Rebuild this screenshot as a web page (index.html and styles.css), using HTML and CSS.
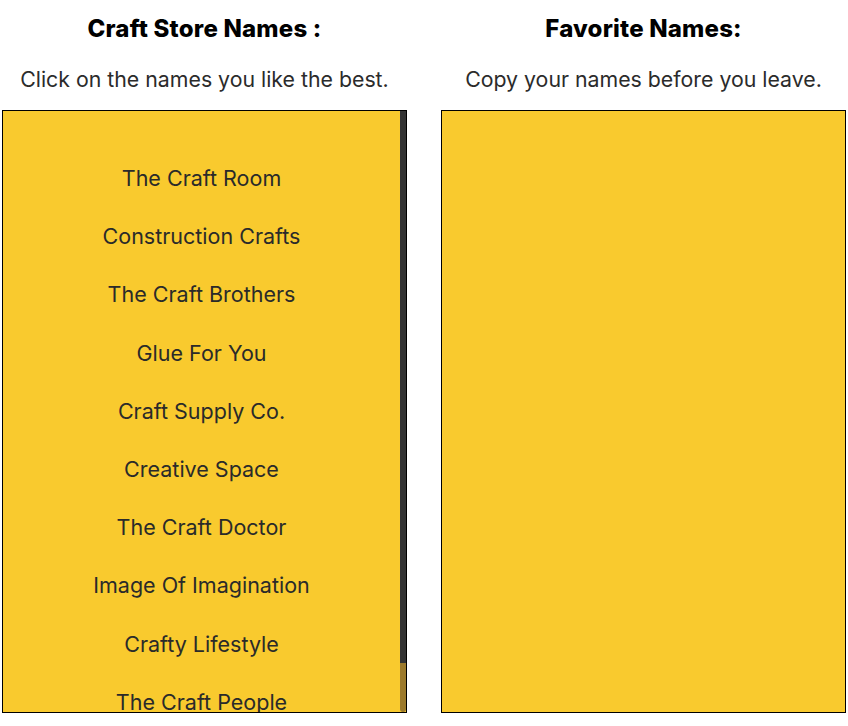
FILE: index.html
```html
<!DOCTYPE html>
<html lang="en">
<head>
  <meta charset="UTF-8">
  <title>Craft Store Names</title>
  <link rel="stylesheet" href="styles.css">
</head>
<body>

<div id="container">
  <div class="column">
    <h2>Craft Store Names :</h2>
    <p class="hint">Click on the names you like the best.</p>
    <div class="box">
      <ul id="nameList" class="list">
        <li>The Craft Room</li>
        <li>Construction Crafts</li>
        <li>The Craft Brothers</li>
        <li>Glue For You</li>
        <li>Craft Supply Co.</li>
        <li>Creative Space</li>
        <li>The Craft Doctor</li>
        <li>Image Of Imagination</li>
        <li>Crafty Lifestyle</li>
        <li>The Craft People</li>
      </ul>
      <div class="scrollbar">
        <div class="thumb"></div>
      </div>
    </div>
  </div>

  <div class="column">
    <h2>Favorite Names:</h2>
    <p class="hint">Copy your names before you leave.</p>
    <div class="box">
      <ul id="favoriteList" class="list"></ul>
    </div>
  </div>
</div>

</body>
</html>
```

FILE: styles.css
```css
body {
  margin: 0;
  padding: 0;
  background-color: #fff;
  font-family: Inter, "Liberation Sans", sans-serif;
  color: #2b2b2b;
}

#container {
  display: grid;
  grid-template-columns: 405px 405px;
  column-gap: 34px;
  padding-left: 2px;
}

.column h2 {
  margin: 15px 0 0;
  text-align: center;
  font-family: Inter, sans-serif;
  font-weight: 800;
  font-size: 24px;
  line-height: 28px;
  letter-spacing: 0.2px;
  color: #000;
}

.column .hint {
  margin: 24px 0 0;
  text-align: center;
  font-size: 21.3px;
  line-height: 24px;
  color: #2b2b2b;
}

.box {
  display: flex;
  margin: 19px 0 0;
  height: 603px;
  box-sizing: border-box;
  border: 1px solid #000;
  background-color: #f9ca2e;
  overflow: hidden;
}

.list {
  flex: 1;
  list-style: none;
  margin: 0;
  padding: 38px 0 36px;
  overflow: hidden;
}

.list li {
  height: 58.2px;
  line-height: 58px;
  text-align: center;
  font-size: 21.5px;
  color: #2a2a2a;
  cursor: pointer;
}

.scrollbar {
  display: flex;
  flex-direction: column;
  width: 6px;
  background-color: #9c7a2c;
  border-radius: 0 0 3px 3px;
}

.scrollbar .thumb {
  height: 552px;
  background-color: #333;
}
```
